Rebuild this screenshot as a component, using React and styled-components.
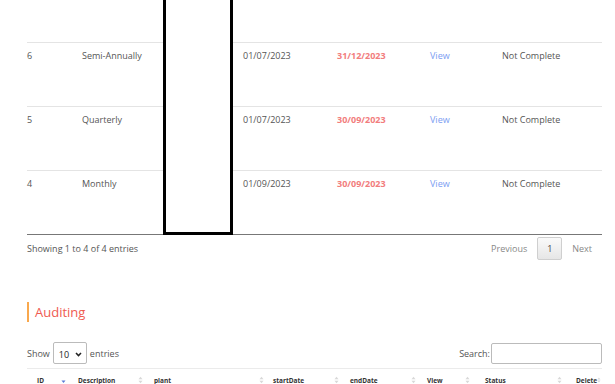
import React from 'react';
import styled, { createGlobalStyle } from 'styled-components';

const GlobalStyle = createGlobalStyle`
    html, body {
        margin: 0;
        padding: 0;
        background: #fff;
        font-family: "Open Sans", "Noto Sans", sans-serif;
        overflow: hidden;
    }
`;

const Page = styled.div`
    width: 615px;
    height: 384px;
    padding: 0 13px 0 27px;
    box-sizing: border-box;
    overflow: hidden;
`;

const TableWrap = styled.div`
    position: relative;
    border-bottom: 1px solid #777;
`;

const Row = styled.div`
    display: grid;
    grid-template-columns: 55px 81px 80px 94px 93px 72px 100px;
    height: ${p => p.$h || 64}px;
    box-sizing: border-box;
    border-top: ${p => (p.$first ? 'none' : '1px solid #e4e4e4')};
    font-size: 9px;
    line-height: 13px;
    color: #555;
`;

const Cell = styled.div`
    padding-top: 6px;
    white-space: nowrap;
`;

const DueDate = styled(Cell)`
    color: #f27d7d;
    font-weight: 700;
`;

const ViewLink = styled(Cell)`
    color: #7b9cf2;
`;

const Redaction = styled.div`
    position: absolute;
    left: 136px;
    top: -3px;
    width: 70px;
    height: 238px;
    box-sizing: border-box;
    border: 3px solid #000;
    background: #fff;
`;

const Footer = styled.div`
    display: flex;
    justify-content: space-between;
    align-items: center;
    height: 27px;
    font-size: 9px;
    color: #555;
`;

const Pager = styled.div`
    display: flex;
    align-items: center;
    gap: 10px;
    padding-right: 10px;
    color: #888;
`;

const PageButton = styled.div`
    width: 25px;
    height: 23px;
    box-sizing: border-box;
    display: flex;
    align-items: center;
    justify-content: center;
    border: 1px solid #cfcfcf;
    border-radius: 2px;
    background: linear-gradient(#fafafa, #e6e6e6);
    color: #444;
`;

const Heading = styled.h2`
    margin: 40px 0 0;
    padding-left: 6px;
    border-left: 2px solid #f9a84d;
    height: 20px;
    display: flex;
    align-items: center;
    font-size: 13px;
    font-weight: 400;
    color: #ef5a50;
`;

const Controls = styled.div`
    display: flex;
    justify-content: space-between;
    align-items: center;
    margin-top: 20px;
    height: 22px;
    font-size: 9px;
    color: #555;
`;

const Length = styled.label`
    display: flex;
    align-items: center;
    gap: 3px;
`;

const Select = styled.div`
    width: 34px;
    height: 22px;
    box-sizing: border-box;
    border: 1px solid #bbb;
    border-radius: 2px;
    display: flex;
    align-items: center;
    justify-content: space-between;
    padding: 2px 4px 0 5px;
    font-size: 9px;
    color: #222;
`;

const SearchLabel = styled.label`
    display: flex;
    align-items: center;
    gap: 1px;
`;

const SearchBox = styled.div`
    width: 111px;
    height: 21px;
    box-sizing: border-box;
    border: 1px solid #bbb;
    border-radius: 2px;
`;

const HeadRow = styled.div`
    display: grid;
    grid-template-columns: 41px 76px 119px 77px 77px 58px 91px 26px;
    margin-top: 4px;
    padding-left: 10px;
    border-top: 1px solid #ebebeb;
    height: 22px;
    align-items: center;
    font-size: 6.5px;
    font-weight: 700;
    color: #333;
`;

const HeadCell = styled.div`
    display: flex;
    align-items: center;
    justify-content: space-between;
    padding-right: ${p => p.$pr || 0}px;
    white-space: nowrap;
`;

const SortIcon = ({ active }) => (
    <svg width="5" height="8" viewBox="0 0 5 8">
        {active ? (
            <path d="M0.5 4.5 L4.5 4.5 L2.5 7 Z" fill="#5b7bd5" />
        ) : (
            <>
                <path d="M0.5 3.2 L4.5 3.2 L2.5 0.8 Z" fill="#d8d8d8" />
                <path d="M0.5 4.8 L4.5 4.8 L2.5 7.2 Z" fill="#d8d8d8" />
            </>
        )}
    </svg>
);

const Chevron = () => (
    <svg width="7" height="5" viewBox="0 0 7 5">
        <path d="M1 1 L3.5 3.6 L6 1" fill="none" stroke="#222" strokeWidth="1.5" />
    </svg>
);

const tasks = [
    { id: 6, desc: 'Semi-Annually', start: '01/07/2023', end: '31/12/2023' },
    { id: 5, desc: 'Quarterly', start: '01/07/2023', end: '30/09/2023' },
    { id: 4, desc: 'Monthly', start: '01/09/2023', end: '30/09/2023' },
];

const headers = [
    { label: 'ID', active: true, pr: 12 },
    { label: 'Description', pr: 11 },
    { label: 'plant', pr: 9 },
    { label: 'startDate', pr: 11 },
    { label: 'endDate', pr: 11 },
    { label: 'View', pr: 15 },
    { label: 'Status', pr: 14 },
    { label: 'Delete', pr: 1 },
];

export default function App() {
    return (
        <Page>
            <GlobalStyle />
            <TableWrap>
                <Row $first $h={42} />
                {tasks.map(t => (
                    <Row key={t.id}>
                        <Cell>{t.id}</Cell>
                        <Cell>{t.desc}</Cell>
                        <Cell />
                        <Cell>{t.start}</Cell>
                        <DueDate>{t.end}</DueDate>
                        <ViewLink>View</ViewLink>
                        <Cell>Not Complete</Cell>
                    </Row>
                ))}
                <Redaction />
            </TableWrap>
            <Footer>
                <span>Showing 1 to 4 of 4 entries</span>
                <Pager>
                    <span>Previous</span>
                    <PageButton>1</PageButton>
                    <span>Next</span>
                </Pager>
            </Footer>
            <Heading>Auditing</Heading>
            <Controls>
                <Length>
                    Show
                    <Select>
                        <span>10</span>
                        <Chevron />
                    </Select>
                    entries
                </Length>
                <SearchLabel>
                    Search:
                    <SearchBox />
                </SearchLabel>
            </Controls>
            <HeadRow>
                {headers.map(h => (
                    <HeadCell key={h.label} $pr={h.pr}>
                        <span>{h.label}</span>
                        <SortIcon active={h.active} />
                    </HeadCell>
                ))}
            </HeadRow>
        </Page>
    );
}
